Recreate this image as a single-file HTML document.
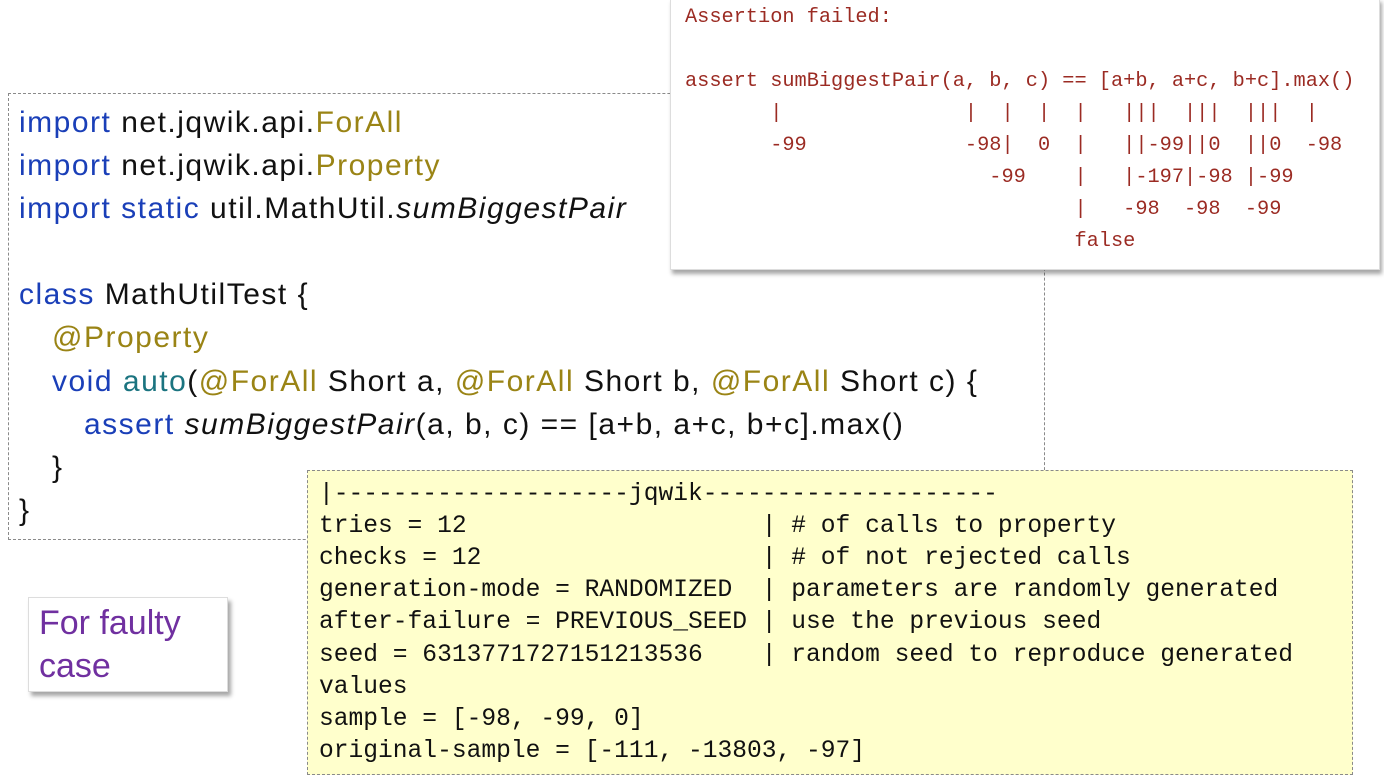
<!DOCTYPE html>
<html><head><meta charset="utf-8"><style>
body{margin:0;width:1384px;height:780px;background:#fff;position:relative;overflow:hidden;font-family:"Liberation Sans",sans-serif}
.code{position:absolute;left:8px;top:93px;width:1037px;height:447px;border:1px dashed #8a8a8a;box-sizing:border-box}
.cl{position:absolute;left:10px;font-size:30px;letter-spacing:1.5px;white-space:pre;color:#111;line-height:34px}
.k{color:#1a3fb8}.a{color:#9a8415}.t{color:#1b7480}i{font-style:italic}
.top{position:absolute;left:670px;top:-2px;width:708px;height:270px;background:#fff;border:1px solid #ddd;box-shadow:2px 4px 4px rgba(0,0,0,.35)}
.tl{position:absolute;left:14px;font-family:"Liberation Mono",monospace;font-size:20.3px;color:#9b2b23;white-space:pre;line-height:24px}
.yel{position:absolute;left:307px;top:470px;width:1046px;height:305px;background:#ffffcc;border:1px dashed #8a8a8a;box-sizing:border-box}
.yl{position:absolute;left:11px;font-family:"Liberation Mono",monospace;font-size:24.6px;color:#111;white-space:pre;line-height:30px}
.note{position:absolute;left:28px;top:597px;width:200px;height:95px;background:#fff;border:1px solid #ddd;box-shadow:3px 4px 4px rgba(0,0,0,.35);box-sizing:border-box;color:#7030a0;font-size:34px;line-height:43px;padding:4px 0 0 10px;letter-spacing:0px}
</style></head><body>
<div class="code">
<div class="cl" style="top:12px"><span class="k">import</span> net.jqwik.api.<span class="a">ForAll</span></div>
<div class="cl" style="top:55px"><span class="k">import</span> net.jqwik.api.<span class="a">Property</span></div>
<div class="cl" style="top:98px"><span class="k">import static</span> util.MathUtil.<i>sumBiggestPair</i></div>
<div class="cl" style="top:184px"><span class="k">class</span> MathUtilTest {</div>
<div class="cl" style="top:227px;left:43px"><span class="a">@Property</span></div>
<div class="cl" style="top:271px;left:43px"><span class="k">void</span> <span class="t">auto</span>(<span class="a">@ForAll</span> Short a, <span class="a">@ForAll</span> Short b, <span class="a">@ForAll</span> Short c) {</div>
<div class="cl" style="top:314px;left:75px"><span class="k">assert</span> <i>sumBiggestPair</i>(a, b, c) == [a+b, a+c, b+c].max()</div>
<div class="cl" style="top:357px;left:43px">}</div>
<div class="cl" style="top:400px">}</div>
</div>
<div class="top">
<div class="tl" style="top:7px">Assertion failed:</div>
<div class="tl" style="top:71px">assert sumBiggestPair(a, b, c) == [a+b, a+c, b+c].max()</div>
<div class="tl" style="top:103px">       |               |  |  |  |   |||  |||  |||  |</div>
<div class="tl" style="top:135px">       -99             -98|  0  |   ||-99||0  ||0  -98</div>
<div class="tl" style="top:167px">                         -99    |   |-197|-98 |-99</div>
<div class="tl" style="top:199px">                                |   -98  -98  -99</div>
<div class="tl" style="top:231px">                                false</div>
</div>
<div class="yel">
<div class="yl" style="top:9px">|--------------------jqwik--------------------</div>
<div class="yl" style="top:41px">tries = 12                    | # of calls to property</div>
<div class="yl" style="top:73px">checks = 12                   | # of not rejected calls</div>
<div class="yl" style="top:105px">generation-mode = RANDOMIZED  | parameters are randomly generated</div>
<div class="yl" style="top:137px">after-failure = PREVIOUS_SEED | use the previous seed</div>
<div class="yl" style="top:170px">seed = 6313771727151213536    | random seed to reproduce generated</div>
<div class="yl" style="top:202px">values</div>
<div class="yl" style="top:234px">sample = [-98, -99, 0]</div>
<div class="yl" style="top:266px">original-sample = [-111, -13803, -97]</div>
</div>
<div class="note">For faulty<br>case</div>
</body></html>
